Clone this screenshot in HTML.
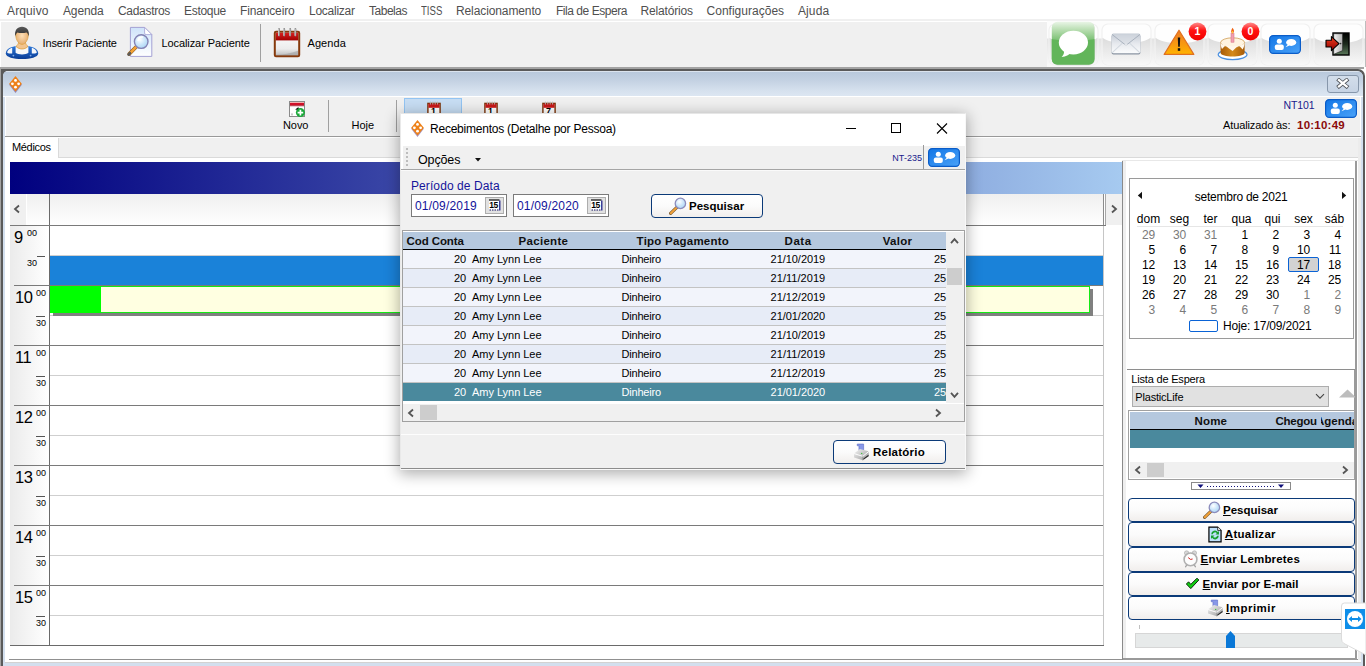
<!DOCTYPE html><html><head>
<meta charset="utf-8">
<title>Agenda</title>
<style>
html,body{margin:0;padding:0;}
body{width:1366px;height:666px;overflow:hidden;background:#fff;font-family:"Liberation Sans",sans-serif;font-size:12px;color:#000;position:relative;}
.a{position:absolute;}
.t{position:absolute;white-space:nowrap;line-height:1;}
/* menu */
#menu{left:0;top:0;width:1366px;height:20px;background:#fff;}
#menu .t{top:5px;font-size:12px;color:#4f4f4f;}
/* main toolbar */
#tb{left:1px;top:22px;width:1364px;height:45px;background:#f0f0f0;}
#tb .lbl{font-size:11px;color:#000;top:16px;}
/* inner window */
#mdi{left:0;top:67px;width:1363px;height:599px;}
.hl{position:absolute;height:1px;}
.vl{position:absolute;width:1px;}
/* schedule */
.hr{font-size:16.5px;color:#000;letter-spacing:-.5px;}
.mm{font-size:9px;color:#000;}
/* buttons */
.btn{position:absolute;border:1px solid #0b3a78;border-radius:4px;background:linear-gradient(#ffffff 0%,#fbfbfb 50%,#f1eeec 100%);box-sizing:border-box;}
.btn .t{font-weight:bold;font-size:11.5px;color:#000;}
/* grid */
.gh{font-weight:bold;font-size:11.5px;color:#101010;}
.gr{position:absolute;left:403px;width:543px;height:18px;}
.gr .t{top:4px;font-size:11px;color:#000;}
.cal{font-size:12px;color:#000;}
.cal .t{font-size:12px;}
.g{color:#7a7a7a;}
</style>
</head>
<body>
<!-- MENU BAR -->
<div id="menu" class="a">
<span class="t" style="left: 7px; letter-spacing: 0.13px;">Arquivo</span>
<span class="t" style="left: 63px; letter-spacing: -0.13px;">Agenda</span>
<span class="t" style="left: 118px; letter-spacing: -0.3px;">Cadastros</span>
<span class="t" style="left: 184px; letter-spacing: -0.29px;">Estoque</span>
<span class="t" style="left: 240px; letter-spacing: -0.15px;">Financeiro</span>
<span class="t" style="left: 309px; letter-spacing: -0.25px;">Localizar</span>
<span class="t" style="left: 369px; letter-spacing: -0.48px;">Tabelas</span>
<span class="t" style="left:421px;display:inline-block;transform:scaleX(.8);transform-origin:0 0">TISS</span>
<span class="t" style="left: 456px; letter-spacing: -0.11px;">Relacionamento</span>
<span class="t" style="left: 556px; letter-spacing: -0.46px;">Fila de Espera</span>
<span class="t" style="left: 640.5px; letter-spacing: -0.16px;">Relatórios</span>
<span class="t" style="left: 706.5px; letter-spacing: 0.02px;">Configurações</span>
<span class="t" style="left: 798px; letter-spacing: 0.1px;">Ajuda</span>
</div>
<div class="a" style="left:0;top:19px;width:1366px;height:2px;background:#f0f0f0"></div>
<!-- MAIN TOOLBAR -->
<div id="tb" class="a">
<span class="t lbl" style="left: 41.5px; letter-spacing: -0.13px;">Inserir Paciente</span>
<span class="t lbl" style="left: 160.5px; letter-spacing: -0.09px;">Localizar Paciente</span>
<div class="vl" style="left:259px;top:2px;height:38px;background:#a0a0a0"></div>
<span class="t lbl" style="left: 306.5px; letter-spacing: 0.08px;">Agenda</span>
</div>
<!-- TOOLBAR ICONS -->
<svg width="0" height="0" style="position:absolute">
<defs>
<linearGradient id="gBlue" x1="0" y1="0" x2="0" y2="1"><stop offset="0" stop-color="#2d78d8"></stop><stop offset="1" stop-color="#093c96"></stop></linearGradient>
<radialGradient id="gFace" cx=".5" cy=".45" r=".6"><stop offset="0" stop-color="#fde0b8"></stop><stop offset="1" stop-color="#e3a868"></stop></radialGradient>
<linearGradient id="gHair" x1="0" y1="0" x2="0" y2="1"><stop offset="0" stop-color="#5a5a5a"></stop><stop offset="1" stop-color="#2a2a2a"></stop></linearGradient>
<linearGradient id="gDoc" x1="0" y1="0" x2="0" y2="1"><stop offset="0" stop-color="#cfe3fa"></stop><stop offset="1" stop-color="#ffffff"></stop></linearGradient>
<radialGradient id="gLens" cx=".4" cy=".35" r=".7"><stop offset="0" stop-color="#ffffff"></stop><stop offset=".5" stop-color="#cfe8fb"></stop><stop offset="1" stop-color="#a8d4f4"></stop></radialGradient>
<linearGradient id="gRed" x1="0" y1="0" x2="0" y2="1"><stop offset="0" stop-color="#d82020"></stop><stop offset="1" stop-color="#a00000"></stop></linearGradient>
<linearGradient id="gPage" x1="0" y1="0" x2="0" y2="1"><stop offset="0" stop-color="#ffffff"></stop><stop offset=".7" stop-color="#ececec"></stop><stop offset="1" stop-color="#b8b8b8"></stop></linearGradient>
<linearGradient id="gGreen" x1="0" y1="0" x2="0" y2="1"><stop offset="0" stop-color="#e9f5e6"></stop><stop offset=".2" stop-color="#b5dcae"></stop><stop offset=".42" stop-color="#7ec277"></stop><stop offset=".46" stop-color="#63b35b"></stop><stop offset="1" stop-color="#62b75a"></stop></linearGradient>
<linearGradient id="gGloss" x1="0" y1="0" x2="0" y2="1"><stop offset="0" stop-color="#dcdcdc"></stop><stop offset="1" stop-color="#f8f8f8"></stop></linearGradient>
<linearGradient id="gWarn" x1="0" y1="0" x2="0" y2="1"><stop offset="0" stop-color="#ef7d28"></stop><stop offset=".6" stop-color="#f89a10"></stop><stop offset="1" stop-color="#ffb400"></stop></linearGradient>
<linearGradient id="gBadge" x1="0" y1="0" x2="0" y2="1"><stop offset="0" stop-color="#ff8a8a"></stop><stop offset=".45" stop-color="#ff1010"></stop><stop offset="1" stop-color="#f00000"></stop></linearGradient>
<linearGradient id="gMail" x1="0" y1="0" x2="0" y2="1"><stop offset="0" stop-color="#c2c9d3"></stop><stop offset=".5" stop-color="#e6e9ee"></stop><stop offset="1" stop-color="#fbfcfd"></stop></linearGradient>
<linearGradient id="gCake" x1="0" y1="0" x2="1" y2="0"><stop offset="0" stop-color="#a85c08"></stop><stop offset=".5" stop-color="#d48a1c"></stop><stop offset="1" stop-color="#a85c08"></stop></linearGradient>
<linearGradient id="gChat" x1="0" y1="0" x2="1" y2="1"><stop offset="0" stop-color="#1276e6"></stop><stop offset="1" stop-color="#4aa2f8"></stop></linearGradient>
<linearGradient id="gDoor" x1="0" y1="0" x2="1" y2="0"><stop offset="0" stop-color="#f4f4f4"></stop><stop offset="1" stop-color="#b0b0b0"></stop></linearGradient>
<linearGradient id="gFloor" x1="0" y1="0" x2="0" y2="1"><stop offset="0" stop-color="#000"></stop><stop offset=".5" stop-color="#1c2a1c"></stop><stop offset="1" stop-color="#5c7a5c"></stop></linearGradient>
<linearGradient id="gArrow" x1="0" y1="0" x2="0" y2="1"><stop offset="0" stop-color="#f04020"></stop><stop offset="1" stop-color="#900000"></stop></linearGradient>
<linearGradient id="gPrn" x1="0" y1="0" x2="1" y2="1"><stop offset="0" stop-color="#f4f4f4"></stop><stop offset="1" stop-color="#9a9a9a"></stop></linearGradient>
</defs></svg>
<!-- person -->
<svg class="a" style="left:5px;top:26px" width="34" height="34" viewBox="0 0 34 34">
<path d="M.8 27.400 C.8 22.600 7 20.600 11.600 20 L22.400 20 C27 20.600 33.200 22.600 33.200 27.400 C33.200 31 25.400 33 17 33 C8.600 33 .8 31 .8 27.400 Z" fill="url(#gBlue)"></path>
<path d="M2.200 26.800 C2.200 24 4.800 22.600 7.200 21.800 L7.200 27.600 C5.400 27.600 3.200 27.400 2.200 26.800 Z M31.800 26.800 C31.800 24 29.200 22.600 26.800 21.800 L26.800 27.600 C28.600 27.600 30.800 27.400 31.800 26.800 Z" fill="#f4f6fa"></path>
<path d="M10.600 20.200 L23.400 20.200 L23.400 26.800 C22 28 19.600 28.400 17 28.400 C14.400 28.400 12 28 10.600 26.800 Z" fill="#f6f7f9"></path>
<path d="M14 14 L20 14 C20 17.600 21.600 19.400 23 20.400 C21.400 22.200 19 23 17 23 C15 23 12.600 22.200 11 20.400 C12.400 19.400 14 17.600 14 14 Z" fill="#f2c48e" stroke="#d89a30" stroke-width=".7"></path>
<path d="M10.800 9.600 C10.800 5 13 2.400 17 2.400 C21 2.400 23.200 5 23.200 9.600 C23.200 13.600 20.400 18.400 17 18.400 C13.600 18.400 10.800 13.600 10.800 9.600 Z" fill="url(#gFace)" stroke="#d8982c" stroke-width=".6"></path>
<path d="M10.400 10.600 C9 4.400 12.400 .8 17 .8 C21.600 .8 25 4.400 23.600 10.600 C23.400 8.400 22.600 7 21.400 6.400 C18.400 7.400 14.400 7.200 12.400 6.400 C11.200 7.200 10.600 8.600 10.400 10.600 Z" fill="url(#gHair)"></path>
<circle cx="8.400" cy="29.600" r=".9" fill="#7eaaea"></circle><circle cx="25.600" cy="29.600" r=".9" fill="#7eaaea"></circle>
</svg>
<!-- doc + magnifier -->
<svg class="a" style="left:126px;top:26px" width="28" height="32" viewBox="0 0 28 32">
<path d="M4.400 1.400 H18.600 L25.800 8.600 V30.400 H4.400 Z" fill="url(#gDoc)" stroke="#a4a2d4" stroke-width="1"></path>
<path d="M18.600 1.400 L25.800 8.600 H20 Q18.600 8.600 18.600 7 Z" fill="#fff" stroke="#a4a2d4" stroke-width=".8"></path>
<path d="M11 20 L3.200 28" stroke="#8a5a20" stroke-width="3.800" stroke-linecap="round"></path>
<path d="M11 20 L3.400 27.800" stroke="#f5a233" stroke-width="2.600" stroke-linecap="round"></path>
<path d="M2.600 28.600 L4 27.200" stroke="#5a5a5a" stroke-width="2.600" stroke-linecap="round"></path>
<circle cx="15.200" cy="15.600" r="6.800" fill="url(#gLens)" stroke="#8482b4" stroke-width="1.400"></circle>
<path d="M12 14.400 C12.400 12 14.400 10.800 16.600 11" fill="none" stroke="#fff" stroke-width="1.400" stroke-linecap="round"></path>
</svg>
<!-- calendar -->
<svg class="a" style="left:272px;top:28px" width="30" height="30" viewBox="0 0 30 30">
<rect x="2.800" y="3.800" width="24.400" height="24.400" rx="1.200" fill="url(#gPage)" stroke="#863a0c" stroke-width="2"></rect>
<path d="M3.800 4.800 H26.200 V12.400 H3.800 Z" fill="url(#gRed)"></path>
<path d="M4 26.800 C12 26.800 18 25.600 26 22.800 V27.200 H4 Z" fill="#9a9a9a" opacity=".55"></path>
<path d="M7 1 V7.600 M12.200 1 V7.600 M18.200 1 V7.600 M23.400 1 V7.600" stroke="#7a7a7a" stroke-width="1.800" stroke-linecap="round"></path>
<path d="M6.700 1 V7.400 M11.900 1 V7.400 M17.900 1 V7.400 M23.100 1 V7.400" stroke="#e4e4e4" stroke-width=".9" stroke-linecap="round"></path>
</svg>
<!-- gloss cells -->
<div class="a" style="left:1047px;top:21px;width:318px;height:46px;background:linear-gradient(#fcfcfc 0,#fcfcfc 17px,#e4e4e4 18px,#f7f7f7 42px,#fafafa 46px)"></div>
<svg class="a" style="left:1048px;top:23px" width="51" height="43" viewBox="0 0 51 43"><rect x="1" y="1" width="49" height="41" rx="6" fill="#fefefe" stroke="#f1f1f1" stroke-width="1.2"></rect><path d="M1.500 14.800 C5 17.600 13 20.200 25.500 20.200 C38 20.200 46 17.600 49.500 14.800 V36 Q49.500 41.500 44 41.500 H7 Q1.500 41.500 1.500 36 Z" fill="url(#gGloss)"></path></svg>
<svg class="a" style="left:1101px;top:23px" width="51" height="43" viewBox="0 0 51 43"><rect x="1" y="1" width="49" height="41" rx="6" fill="#fefefe" stroke="#f1f1f1" stroke-width="1.2"></rect><path d="M1.500 14.800 C5 17.600 13 20.200 25.500 20.200 C38 20.200 46 17.600 49.500 14.800 V36 Q49.500 41.500 44 41.500 H7 Q1.500 41.500 1.500 36 Z" fill="url(#gGloss)"></path></svg>
<svg class="a" style="left:1154px;top:23px" width="51" height="43" viewBox="0 0 51 43"><rect x="1" y="1" width="49" height="41" rx="6" fill="#fefefe" stroke="#f1f1f1" stroke-width="1.2"></rect><path d="M1.500 14.800 C5 17.600 13 20.200 25.500 20.200 C38 20.200 46 17.600 49.500 14.800 V36 Q49.500 41.500 44 41.500 H7 Q1.500 41.500 1.500 36 Z" fill="url(#gGloss)"></path></svg>
<svg class="a" style="left:1207px;top:23px" width="51" height="43" viewBox="0 0 51 43"><rect x="1" y="1" width="49" height="41" rx="6" fill="#fefefe" stroke="#f1f1f1" stroke-width="1.2"></rect><path d="M1.500 14.800 C5 17.600 13 20.200 25.500 20.200 C38 20.200 46 17.600 49.500 14.800 V36 Q49.500 41.500 44 41.500 H7 Q1.500 41.500 1.500 36 Z" fill="url(#gGloss)"></path></svg>
<svg class="a" style="left:1260px;top:23px" width="51" height="43" viewBox="0 0 51 43"><rect x="1" y="1" width="49" height="41" rx="6" fill="#fefefe" stroke="#f1f1f1" stroke-width="1.2"></rect><path d="M1.500 14.800 C5 17.600 13 20.200 25.500 20.200 C38 20.200 46 17.600 49.500 14.800 V36 Q49.500 41.500 44 41.500 H7 Q1.500 41.500 1.500 36 Z" fill="url(#gGloss)"></path></svg>
<svg class="a" style="left:1313px;top:23px" width="51" height="43" viewBox="0 0 51 43"><rect x="1" y="1" width="49" height="41" rx="6" fill="#fefefe" stroke="#f1f1f1" stroke-width="1.2"></rect><path d="M1.500 14.800 C5 17.600 13 20.200 25.500 20.200 C38 20.200 46 17.600 49.500 14.800 V36 Q49.500 41.500 44 41.500 H7 Q1.500 41.500 1.500 36 Z" fill="url(#gGloss)"></path></svg>
<div class="vl" style="left:1365px;top:21px;height:46px;background:#bdbdbd"></div>
<!-- green chat -->
<svg class="a" style="left:1051px;top:21px" width="45" height="45" viewBox="0 0 45 45"><rect x="1" y="1.600" width="42.600" height="42.600" rx="5.500" fill="#6a6a6a" opacity=".25"></rect><rect x=".8" y=".8" width="42.600" height="42.600" rx="5.500" fill="url(#gGreen)"></rect><path d="M.8 18 C10 20.500 34 20.500 43.400 18 V38 Q43.400 43.400 38 43.400 H6.200 Q.8 43.400 .8 38 Z" fill="#62b55a"></path><ellipse cx="22.400" cy="21.600" rx="14.600" ry="11.800" fill="#fff"></ellipse><path d="M13 29 C13.400 32 12.600 34 10.600 36 C15 35.600 18 34 20 31.600 Z" fill="#fff"></path></svg>
<!-- mail -->
<svg class="a" style="left:1111px;top:33px" width="30" height="22" viewBox="0 0 30 22"><rect x=".6" y="1.600" width="28.800" height="20" rx="1.800" fill="#8a94a2"></rect><rect x=".6" y=".6" width="28.800" height="19.600" rx="1.800" fill="url(#gMail)"></rect><path d="M1 19.800 L11.400 10.200 M29 19.800 L18.600 10.200" stroke="#d3d9e0" stroke-width="1.100"></path><path d="M1 1.200 L15 12.400 L29 1.200 Z" fill="#d5dae1" opacity=".55"></path><path d="M1 1.400 L15 12.400 L29 1.400" fill="none" stroke="#a9b2be" stroke-width="1"></path><path d="M13.200 11.400 L15 12.800 L16.800 11.400 Z" fill="#fff"></path></svg>
<!-- warning -->
<svg class="a" style="left:1163px;top:29px" width="32" height="27" viewBox="0 0 32 27"><path d="M16 1.200 L30.800 25.400 H1.200 Z" fill="url(#gWarn)" stroke="#e07020" stroke-width="1.200" stroke-linejoin="round"></path><path d="M14.800 8.600 H17.200 L16.800 17.800 H15.200 Z" fill="#111"></path><rect x="14.800" y="19.200" width="2.400" height="2.600" fill="#111"></rect></svg>
<svg class="a" style="left:1188px;top:22px" width="19" height="19" viewBox="0 0 19 19"><circle cx="9.500" cy="9.500" r="8.900" fill="url(#gBadge)"></circle><text x="9.300" y="13.400" font-family="Liberation Sans" font-size="10.500" font-weight="bold" fill="#fff" text-anchor="middle">1</text></svg>
<!-- cake -->
<svg class="a" style="left:1217px;top:27px" width="31" height="34" viewBox="0 0 31 34"><ellipse cx="15.600" cy="27.600" rx="14.400" ry="5" fill="#fff" stroke="#4a90e0" stroke-width="1.200"></ellipse><path d="M3.600 15.600 V26 C3.600 30.600 27.600 30.600 27.600 26 V15.600 Z" fill="url(#gCake)"></path><ellipse cx="15.600" cy="15.600" rx="12" ry="4.800" fill="#fff4e0" stroke="#c89040" stroke-width=".7"></ellipse><path d="M3.600 15.600 C3.600 18 4 20 5 22 L8.400 18.400 L12 21.600 L15.600 24 L19.200 20.600 L22 18.400 L25.600 22.400 C27 20.400 27.600 18 27.600 15.600 C27.600 20.400 3.600 20.400 3.600 15.600 Z" fill="#fff8ec"></path><rect x="14" y="6.600" width="3" height="8.600" fill="#f0a0b0" stroke="#d86a80" stroke-width=".5"></rect><path d="M15.500 .8 C17.600 3 17.400 5.400 15.500 6.800 C13.600 5.400 13.800 3.600 15.500 .8 Z" fill="#f06010"></path><path d="M15.500 3.400 C16.400 4.600 16.300 5.800 15.500 6.600 C14.700 5.800 14.700 4.800 15.500 3.400 Z" fill="#ffd040"></path></svg>
<svg class="a" style="left:1241px;top:22px" width="19" height="19" viewBox="0 0 19 19"><circle cx="9.500" cy="9.500" r="8.900" fill="url(#gBadge)"></circle><text x="9.500" y="13.400" font-family="Liberation Sans" font-size="10.500" font-weight="bold" fill="#fff" text-anchor="middle">0</text></svg>
<!-- blue chat -->
<svg class="a" style="left:1269px;top:35px" width="32" height="19" viewBox="0 0 32 19"><rect x=".6" y=".6" width="30.8" height="17.8" rx="3.6" fill="url(#gChat)" stroke="#0a5cc8" stroke-width="1.2"></rect><circle cx="10.3" cy="6.3" r="2.5" fill="#fff"></circle><rect x="5.8" y="9.4" width="9" height="5.6" rx="2" fill="#fff"></rect><ellipse cx="22.2" cy="7.4" rx="5.1" ry="3.5" fill="#fff"></ellipse><path d="M19 9.4 L16.4 12.3 L20.5 10.5 Z" fill="#fff"></path></svg>
<!-- exit -->
<svg class="a" style="left:1325px;top:32px" width="26" height="24" viewBox="0 0 26 24"><rect x="8" y="1" width="16" height="22" fill="url(#gFloor)" stroke="#000" stroke-width="1.400"></rect><path d="M8.700 1.700 H17.600 V18.600 L8.700 22.300 Z" fill="url(#gDoor)" stroke="#222" stroke-width=".6"></path><path d="M1 8.200 H6.400 V4.600 L14 11.600 L6.400 18.600 V15 H1 Z" fill="url(#gArrow)" stroke="#000" stroke-width="1.100" stroke-linejoin="round"></path><circle cx="15.600" cy="11.600" r=".8" fill="#333"></circle></svg>

<!-- MDI CHILD FRAME -->
<div class="a" style="left:0;top:67px;width:1364px;height:2px;background:#a3a3a3"></div>
<div class="a" style="left:0;top:69px;width:1365px;height:597px;background:#5a5a5a;border-radius:0 7px 0 0"></div>
<div class="a" style="left:0;top:69px;width:1px;height:597px;background:#a3a3a3"></div>
<div class="a" style="left:3px;top:71px;width:1360px;height:595px;background:#d3dfee;border-radius:5px 6px 0 0"></div>
<div class="a" style="left:3px;top:71px;width:1360px;height:26px;background:linear-gradient(#fdfeff 0,#b9c9dc 1px,#c3d1e2 9px,#d6e1ee 20px,#dce6f2 25px,#ffffff 25px);border-radius:5px 6px 0 0"></div>
<div class="a" style="left:5px;top:96px;width:1356px;height:567px;background:#fff"></div>
<div class="a" style="left:6px;top:97px;width:1354px;height:39px;background:#f0f0f0"></div>
<!-- title icon -->
<svg class="a" style="left:7.500px;top:75px" width="15" height="18" viewBox="0 0 15 18"><path d="M7.5 1.2 L13.8 9 L7.5 17.2 L1.2 9 Z" fill="#5a3c8c" opacity=".55" transform="translate(0,0.8)"></path><path d="M7.5 1 L13.8 8.8 L7.5 16.6 L1.2 8.8 Z" fill="#ee8118"></path><circle cx="7.5" cy="5.4" r="1.4" fill="#fff"></circle><circle cx="7.5" cy="12.2" r="1.4" fill="#fff"></circle><circle cx="4.4" cy="8.8" r="1.4" fill="#fff"></circle><circle cx="10.6" cy="8.8" r="1.4" fill="#fff"></circle></svg>
<!-- mdi close -->
<div class="a" style="left:1327px;top:75px;width:32px;height:18px;box-sizing:border-box;border:1px solid #8797ab;border-radius:3px;background:linear-gradient(#d3deeb,#c6d3e4)"></div>
<svg class="a" style="left:1336px;top:78px" width="14" height="11" viewBox="0 0 14 11"><path d="M3 2.200 L10.600 8.400 M10.600 2.200 L3 8.400" stroke="#50545a" stroke-width="3.900" stroke-linecap="square"></path><path d="M3 2.200 L10.600 8.400 M10.600 2.200 L3 8.400" stroke="#fff" stroke-width="2.300" stroke-linecap="square"></path></svg>
<!-- agenda toolbar -->
<span class="t" style="left: 283px; top: 120px; font-size: 11px; letter-spacing: -0.07px;">Novo</span>
<div class="vl" style="left:328px;top:100px;height:32px;background:#a0a0a0"></div>
<span class="t" style="left: 351.5px; top: 120px; font-size: 11px; letter-spacing: -0.01px;">Hoje</span>
<div class="vl" style="left:396px;top:100px;height:32px;background:#a0a0a0"></div>
<div class="a" style="left:404px;top:98px;width:58px;height:37px;box-sizing:border-box;border:1px solid #93c4f2;background:#c7ddf3"></div>
<span class="t" style="left: 1283.5px; top: 100px; font-size: 10.5px; color: rgb(26, 26, 140); letter-spacing: -0.1px;">NT101</span>
<span class="t" style="left: 1223px; top: 120px; font-size: 11px; letter-spacing: -0.12px;">Atualizado às:</span>
<span class="t" style="left: 1297px; top: 120px; font-size: 11.5px; font-weight: bold; color: rgb(139, 10, 10); letter-spacing: 0.24px;">10:10:49</span>
<div class="hl" style="left:5px;top:136px;width:1356px;background:#999"></div>
<!-- novo icon -->
<svg class="a" style="left:289px;top:101px" width="17" height="17" viewBox="0 0 17 17"><rect x=".5" y=".5" width="15" height="15" fill="#fff" stroke="#8a8a8a" stroke-width="1"></rect><rect x="1" y="1" width="14" height="1.200" fill="#f2b0b0"></rect><rect x="1" y="2" width="14" height="2.600" fill="#d01028"></rect><rect x="1" y="4.600" width="14" height=".6" fill="#8a0a18"></rect><path d="M6.200 8.600 L8.800 6.600 H9.800 V10 H7.800 V8.800 Z" fill="#111"></path><rect x="2" y="12.400" width="2" height="2" fill="#c8c8c8"></rect><circle cx="11.400" cy="11.600" r="4.500" fill="#18a838"></circle><path d="M11.400 8.800 V14.400 M8.600 11.600 H14.200" stroke="#fff" stroke-width="1.700"></path></svg>
<!-- mini calendars -->
<svg class="a" style="left:427px;top:101px" width="14" height="16" viewBox="0 0 14 16"><rect x=".9" y="2.4" width="12.2" height="13" fill="#fff" stroke="#7a3208" stroke-width="1.4"></rect><rect x="1.4" y="2.6" width="11.2" height="4.2" fill="#c81818"></rect><path d="M3.4 0.6 V3.6 M5.8 .6 V3.6 M8.2 .6 V3.6 M10.6 .6 V3.6" stroke="#b8b8b8" stroke-width=".9"></path></svg><span class="t" style="left:431px;top:107px;font-size:9px;font-weight:bold">1</span>
<svg class="a" style="left:484px;top:101px" width="14" height="16" viewBox="0 0 14 16"><rect x=".9" y="2.4" width="12.2" height="13" fill="#fff" stroke="#7a3208" stroke-width="1.4"></rect><rect x="1.4" y="2.6" width="11.2" height="4.2" fill="#c81818"></rect><path d="M3.4 0.6 V3.6 M5.8 .6 V3.6 M8.2 .6 V3.6 M10.6 .6 V3.6" stroke="#b8b8b8" stroke-width=".9"></path></svg><span class="t" style="left:488px;top:107px;font-size:9px;font-weight:bold">1</span>
<svg class="a" style="left:542px;top:101px" width="14" height="16" viewBox="0 0 14 16"><rect x=".9" y="2.4" width="12.2" height="13" fill="#fff" stroke="#7a3208" stroke-width="1.4"></rect><rect x="1.4" y="2.6" width="11.2" height="4.2" fill="#c81818"></rect><path d="M3.4 0.6 V3.6 M5.8 .6 V3.6 M8.2 .6 V3.6 M10.6 .6 V3.6" stroke="#b8b8b8" stroke-width=".9"></path></svg><span class="t" style="left:546px;top:107px;font-size:9px;font-weight:bold">7</span>
<svg class="a" style="left:1325px;top:99px" width="32" height="19" viewBox="0 0 32 19"><rect x=".6" y=".6" width="30.8" height="17.8" rx="3.6" fill="url(#gChat)" stroke="#0a5cc8" stroke-width="1.2"></rect><circle cx="10.3" cy="6.3" r="2.5" fill="#fff"></circle><rect x="5.8" y="9.4" width="9" height="5.6" rx="2" fill="#fff"></rect><ellipse cx="22.2" cy="7.4" rx="5.1" ry="3.5" fill="#fff"></ellipse><path d="M19 9.4 L16.4 12.3 L20.5 10.5 Z" fill="#fff"></path></svg>
<!-- tab strip -->
<div class="a" style="left:59px;top:138px;width:1301px;height:19px;background:#f0f0f0"></div>
<div class="hl" style="left:58px;top:157px;width:1302px;background:#dadada"></div>
<div class="vl" style="left:58px;top:138px;height:20px;background:#dadada"></div>
<span class="t" style="left: 12px; top: 142px; font-size: 11px; letter-spacing: -0.34px;">Médicos</span>
<!-- schedule -->
<div class="a" style="left:10px;top:162px;width:1112px;height:32px;background:linear-gradient(90deg,#00007f 0%,#a6caf0 100%)"></div>
<div class="a" style="left:10px;top:194px;width:16px;height:31px;background:#f0f0f0"></div>
<div class="a" style="left:27px;top:194px;width:1077px;height:31px;background:linear-gradient(#efefef,#ffffff)"></div>
<div class="a" style="left:1106px;top:194px;width:16px;height:31px;background:#f0f0f0"></div>
<div class="vl" style="left:1103px;top:194px;height:32px;background:#8c8c8c"></div>
<div class="vl" style="left:1103px;top:226px;height:420px;background:#c6c6c6"></div>
<div class="vl" style="left:1105px;top:194px;height:32px;background:#a8a8a8"></div>
<div class="a" style="left:10px;top:226px;width:39px;height:419px;background:linear-gradient(90deg,#ebebeb,#ffffff)"></div>
<div class="vl" style="left:49px;top:194px;height:452px;background:#6a6a6a"></div>
<div class="hl" style="left:10px;top:225px;width:1096px;background:#7a7a7a"></div>
<span class="t hr" style="left:14px;top:229px">9</span><span class="t mm" style="left:27px;top:229px">00</span>
<div class="hl" style="left:50px;top:255px;width:1053px;background:#cfcfcf"></div>
<div class="hl" style="left:37px;top:256px;width:8px;background:#555"></div><span class="t mm" style="left:27px;top:259px">30</span>
<div class="hl" style="left:14px;top:285px;width:1089px;background:#7a7a7a"></div>
<span class="t hr" style="left:15px;top:289px">10</span><span class="t mm" style="left:36px;top:289px">00</span>
<div class="hl" style="left:50px;top:315px;width:1053px;background:#cfcfcf"></div>
<div class="hl" style="left:36px;top:316px;width:9px;background:#555"></div><span class="t mm" style="left:36px;top:319px">30</span>
<div class="hl" style="left:14px;top:345px;width:1089px;background:#7a7a7a"></div>
<span class="t hr" style="left:15px;top:349px">11</span><span class="t mm" style="left:36px;top:349px">00</span>
<div class="hl" style="left:50px;top:375px;width:1053px;background:#cfcfcf"></div>
<div class="hl" style="left:36px;top:376px;width:9px;background:#555"></div><span class="t mm" style="left:36px;top:379px">30</span>
<div class="hl" style="left:14px;top:405px;width:1089px;background:#7a7a7a"></div>
<span class="t hr" style="left:15px;top:409px">12</span><span class="t mm" style="left:36px;top:409px">00</span>
<div class="hl" style="left:50px;top:435px;width:1053px;background:#cfcfcf"></div>
<div class="hl" style="left:36px;top:436px;width:9px;background:#555"></div><span class="t mm" style="left:36px;top:439px">30</span>
<div class="hl" style="left:14px;top:465px;width:1089px;background:#7a7a7a"></div>
<span class="t hr" style="left:15px;top:469px">13</span><span class="t mm" style="left:36px;top:469px">00</span>
<div class="hl" style="left:50px;top:495px;width:1053px;background:#cfcfcf"></div>
<div class="hl" style="left:36px;top:496px;width:9px;background:#555"></div><span class="t mm" style="left:36px;top:499px">30</span>
<div class="hl" style="left:14px;top:525px;width:1089px;background:#7a7a7a"></div>
<span class="t hr" style="left:15px;top:529px">14</span><span class="t mm" style="left:36px;top:529px">00</span>
<div class="hl" style="left:50px;top:555px;width:1053px;background:#cfcfcf"></div>
<div class="hl" style="left:36px;top:556px;width:9px;background:#555"></div><span class="t mm" style="left:36px;top:559px">30</span>
<div class="hl" style="left:14px;top:585px;width:1089px;background:#7a7a7a"></div>
<span class="t hr" style="left:15px;top:589px">15</span><span class="t mm" style="left:36px;top:589px">00</span>
<div class="hl" style="left:50px;top:615px;width:1053px;background:#cfcfcf"></div>
<div class="hl" style="left:36px;top:616px;width:9px;background:#555"></div><span class="t mm" style="left:36px;top:619px">30</span>
<div class="hl" style="left:10px;top:645px;width:1094px;background:#6a6a6a"></div>
<div class="hl" style="left:9px;top:659px;width:1349px;background:#909090"></div>
<div class="hl" style="left:5px;top:662px;width:1356px;background:#d2d2d2"></div>
<!-- appointments -->
<div class="a" style="left:50px;top:256px;width:1053px;height:29px;background:#1a82d9"></div>
<div class="a" style="left:53px;top:313px;width:1040px;height:3px;background:#808080"></div>
<div class="a" style="left:50px;top:286px;width:1040px;height:27px;background:#ffffe1;box-sizing:border-box;border:1px solid #14ea14"></div>
<div class="a" style="left:50px;top:286px;width:51px;height:27px;background:#00ff00"></div>
<div class="a" style="left:1090px;top:289px;width:3px;height:27px;background:#808080"></div>
<svg class="a" style="left:12px;top:204px" width="10" height="10" viewBox="0 0 10 10"><path d="M7 1.5 L3 5 L7 8.5" fill="none" stroke="#555" stroke-width="1.8"></path></svg>
<svg class="a" style="left:1109px;top:204px" width="10" height="10" viewBox="0 0 10 10"><path d="M3 1.5 L7 5 L3 8.5" fill="none" stroke="#555" stroke-width="1.8"></path></svg>
<!-- RIGHT PANEL -->
<div class="a" style="left:1122px;top:161px;width:1px;height:499px;background:#8a8a8a"></div>
<div class="a" style="left:1123px;top:161px;width:3px;height:498px;background:#efefef"></div>
<div class="a" style="left:1126px;top:161px;width:229px;height:498px;background:#fff"></div>
<div class="a" style="left:1355px;top:161px;width:2px;height:499px;background:#9a9a9a"></div>
<div class="a" style="left:1358px;top:138px;width:3px;height:522px;background:#ececec"></div>
<div class="vl" style="left:1354px;top:370px;height:110px;background:#9a9a9a"></div>
<div class="hl" style="left:1122px;top:160px;width:236px;background:#e8e8e8"></div>
<div class="hl" style="left:1123px;top:658px;width:234px;height:2px;background:#9a9a9a"></div>
<div class="a" style="left:1129px;top:178px;width:225px;height:161px;box-sizing:border-box;border:1px solid #9a9a9a;background:#fff"></div>
<svg class="a" style="left:1137px;top:191px" width="6" height="9" viewBox="0 0 6 9"><path d="M5 0.8 L5 8 L0.8 4.4 Z" fill="#111"></path></svg>
<svg class="a" style="left:1341px;top:191px" width="6" height="9" viewBox="0 0 6 9"><path d="M1 0.8 L1 8 L5.2 4.4 Z" fill="#111"></path></svg>
<span class="t" style="left: 1194.8px; top: 191px; font-size: 12px; letter-spacing: -0.25px;">setembro de 2021</span>
<div class="hl" style="left:1137px;top:226px;width:206px;background:#e6e6e6"></div>
<span class="t" style="left:1128.5px;width:40px;text-align:center;top:213px;font-size:12px">dom</span>
<span class="t" style="left:1159.5px;width:40px;text-align:center;top:213px;font-size:12px">seg</span>
<span class="t" style="left:1190.5px;width:40px;text-align:center;top:213px;font-size:12px">ter</span>
<span class="t" style="left:1221.5px;width:40px;text-align:center;top:213px;font-size:12px">qua</span>
<span class="t" style="left:1252.5px;width:40px;text-align:center;top:213px;font-size:12px">qui</span>
<span class="t" style="left:1283.5px;width:40px;text-align:center;top:213px;font-size:12px">sex</span>
<span class="t" style="left:1314.5px;width:40px;text-align:center;top:213px;font-size:12px">sáb</span>
<div class="a" style="left:1288px;top:257px;width:31px;height:15px;box-sizing:border-box;border:1px solid #0a63d6;border-radius:2px;background:#d2d2d2"></div>
<span class="t g" style="left:1125px;width:30px;text-align:right;top:229px;font-size:12px;letter-spacing:-.2px">29</span>
<span class="t g" style="left:1156px;width:30px;text-align:right;top:229px;font-size:12px;letter-spacing:-.2px">30</span>
<span class="t g" style="left:1187px;width:30px;text-align:right;top:229px;font-size:12px;letter-spacing:-.2px">31</span>
<span class="t" style="left:1218px;width:30px;text-align:right;top:229px;font-size:12px;letter-spacing:-.2px">1</span>
<span class="t" style="left:1249px;width:30px;text-align:right;top:229px;font-size:12px;letter-spacing:-.2px">2</span>
<span class="t" style="left:1280px;width:30px;text-align:right;top:229px;font-size:12px;letter-spacing:-.2px">3</span>
<span class="t" style="left:1311px;width:30px;text-align:right;top:229px;font-size:12px;letter-spacing:-.2px">4</span>
<span class="t" style="left:1125px;width:30px;text-align:right;top:244px;font-size:12px;letter-spacing:-.2px">5</span>
<span class="t" style="left:1156px;width:30px;text-align:right;top:244px;font-size:12px;letter-spacing:-.2px">6</span>
<span class="t" style="left:1187px;width:30px;text-align:right;top:244px;font-size:12px;letter-spacing:-.2px">7</span>
<span class="t" style="left:1218px;width:30px;text-align:right;top:244px;font-size:12px;letter-spacing:-.2px">8</span>
<span class="t" style="left:1249px;width:30px;text-align:right;top:244px;font-size:12px;letter-spacing:-.2px">9</span>
<span class="t" style="left:1280px;width:30px;text-align:right;top:244px;font-size:12px;letter-spacing:-.2px">10</span>
<span class="t" style="left:1311px;width:30px;text-align:right;top:244px;font-size:12px;letter-spacing:-.2px">11</span>
<span class="t" style="left:1125px;width:30px;text-align:right;top:259px;font-size:12px;letter-spacing:-.2px">12</span>
<span class="t" style="left:1156px;width:30px;text-align:right;top:259px;font-size:12px;letter-spacing:-.2px">13</span>
<span class="t" style="left:1187px;width:30px;text-align:right;top:259px;font-size:12px;letter-spacing:-.2px">14</span>
<span class="t" style="left:1218px;width:30px;text-align:right;top:259px;font-size:12px;letter-spacing:-.2px">15</span>
<span class="t" style="left:1249px;width:30px;text-align:right;top:259px;font-size:12px;letter-spacing:-.2px">16</span>
<span class="t" style="left:1280px;width:30px;text-align:right;top:259px;font-size:12px;letter-spacing:-.2px">17</span>
<span class="t" style="left:1311px;width:30px;text-align:right;top:259px;font-size:12px;letter-spacing:-.2px">18</span>
<span class="t" style="left:1125px;width:30px;text-align:right;top:274px;font-size:12px;letter-spacing:-.2px">19</span>
<span class="t" style="left:1156px;width:30px;text-align:right;top:274px;font-size:12px;letter-spacing:-.2px">20</span>
<span class="t" style="left:1187px;width:30px;text-align:right;top:274px;font-size:12px;letter-spacing:-.2px">21</span>
<span class="t" style="left:1218px;width:30px;text-align:right;top:274px;font-size:12px;letter-spacing:-.2px">22</span>
<span class="t" style="left:1249px;width:30px;text-align:right;top:274px;font-size:12px;letter-spacing:-.2px">23</span>
<span class="t" style="left:1280px;width:30px;text-align:right;top:274px;font-size:12px;letter-spacing:-.2px">24</span>
<span class="t" style="left:1311px;width:30px;text-align:right;top:274px;font-size:12px;letter-spacing:-.2px">25</span>
<span class="t" style="left:1125px;width:30px;text-align:right;top:289px;font-size:12px;letter-spacing:-.2px">26</span>
<span class="t" style="left:1156px;width:30px;text-align:right;top:289px;font-size:12px;letter-spacing:-.2px">27</span>
<span class="t" style="left:1187px;width:30px;text-align:right;top:289px;font-size:12px;letter-spacing:-.2px">28</span>
<span class="t" style="left:1218px;width:30px;text-align:right;top:289px;font-size:12px;letter-spacing:-.2px">29</span>
<span class="t" style="left:1249px;width:30px;text-align:right;top:289px;font-size:12px;letter-spacing:-.2px">30</span>
<span class="t g" style="left:1280px;width:30px;text-align:right;top:289px;font-size:12px;letter-spacing:-.2px">1</span>
<span class="t g" style="left:1311px;width:30px;text-align:right;top:289px;font-size:12px;letter-spacing:-.2px">2</span>
<span class="t g" style="left:1125px;width:30px;text-align:right;top:304px;font-size:12px;letter-spacing:-.2px">3</span>
<span class="t g" style="left:1156px;width:30px;text-align:right;top:304px;font-size:12px;letter-spacing:-.2px">4</span>
<span class="t g" style="left:1187px;width:30px;text-align:right;top:304px;font-size:12px;letter-spacing:-.2px">5</span>
<span class="t g" style="left:1218px;width:30px;text-align:right;top:304px;font-size:12px;letter-spacing:-.2px">6</span>
<span class="t g" style="left:1249px;width:30px;text-align:right;top:304px;font-size:12px;letter-spacing:-.2px">7</span>
<span class="t g" style="left:1280px;width:30px;text-align:right;top:304px;font-size:12px;letter-spacing:-.2px">8</span>
<span class="t g" style="left:1311px;width:30px;text-align:right;top:304px;font-size:12px;letter-spacing:-.2px">9</span>
<div class="a" style="left:1189px;top:320px;width:29px;height:12px;box-sizing:border-box;border:1px solid #0a63d6;border-radius:2px;background:#fff"></div>
<span class="t" style="left: 1223px; top: 320px; font-size: 12px; letter-spacing: -0.19px;">Hoje: 17/09/2021</span>
<!-- lista de espera -->
<div class="hl" style="left:1127px;top:369px;width:228px;background:#8e8e8e"></div>
<span class="t" style="left: 1131.3px; top: 374px; font-size: 11px; letter-spacing: -0.19px;">Lista de Espera</span>
<div class="a" style="left:1132px;top:386px;width:197px;height:21px;box-sizing:border-box;border:1px solid #adadad;background:#e1e1e1"></div>
<span class="t" style="left: 1135.3px; top: 392px; font-size: 11px; letter-spacing: -0.19px;">PlasticLife</span>
<svg class="a" style="left:1315px;top:393px" width="10" height="7" viewBox="0 0 10 7"><path d="M1 1.2 L5 5.2 L9 1.2" fill="none" stroke="#444" stroke-width="1.1"></path></svg>
<svg class="a" style="left:1339px;top:389px" width="16" height="9" viewBox="0 0 16 9"><path d="M0 8.5 L8.5 0.5 L16 7.5 L16 8.5 Z" fill="#bdbdbd"></path></svg>
<div class="a" style="left:1128px;top:410px;width:227px;height:70px;box-sizing:border-box;border:1px solid #a0a0a0;background:#fff"></div>
<div class="a" style="left:1130px;top:412px;width:224px;height:17px;background:#b5c8de"></div>
<div class="hl" style="left:1130px;top:429px;width:224px;background:#000"></div>
<span class="t gh" style="left: 1194.5px; top: 416px; letter-spacing: 0.16px;">Nome</span>
<span class="t gh" style="left: 1275.5px; top: 416px; letter-spacing: -0.27px;">Chegou</span>
<div class="a" style="left:1321px;top:412px;width:33px;height:17px;overflow:hidden"><span class="t gh" style="left:-5px;top:4px">Agenda</span></div>
<div class="a" style="left:1130px;top:430px;width:224px;height:18px;background:#4a899d"></div>
<div class="a" style="left:1130px;top:462px;width:224px;height:16px;background:#f0f0f0"></div>
<div class="a" style="left:1147px;top:463px;width:17px;height:14px;background:#cdcdcd"></div>
<svg class="a" style="left:1133px;top:465px" width="10" height="10" viewBox="0 0 10 10"><path d="M7 1.5 L3 5 L7 8.5" fill="none" stroke="#555" stroke-width="1.8"></path></svg>
<svg class="a" style="left:1340px;top:465px" width="10" height="10" viewBox="0 0 10 10"><path d="M3 1.5 L7 5 L3 8.5" fill="none" stroke="#555" stroke-width="1.8"></path></svg>
<!-- splitter handle -->
<div class="a" style="left:1191px;top:482px;width:100px;height:8px;box-sizing:border-box;border:1px solid #8a8a8a;background:#fff"></div>
<svg class="a" style="left:1197px;top:484px" width="88" height="5" viewBox="0 0 88 5"><path d="M0.5 0.5 L6.5 0.5 L3.5 4 Z M81 0.5 L87 0.5 L84 4 Z" fill="#10107a"></path><path d="M10 2.5 H78" stroke="#10107a" stroke-width="1" stroke-dasharray="1 2"></path></svg>
<div class="btn" style="left:1128px;top:498px;width:227px;height:24px"></div><span class="t" style="left:1223px;top:505px;font-weight:bold;font-size:11.5px"><u>P</u>esquisar</span>
<div class="btn" style="left:1128px;top:522px;width:227px;height:25px"></div><span class="t" style="left: 1224.8px; top: 529px; font-weight: bold; font-size: 11.5px; letter-spacing: 0.27px;"><u>A</u>tualizar</span>
<div class="btn" style="left:1128px;top:547px;width:227px;height:25px"></div><span class="t" style="left: 1200.6px; top: 554px; font-weight: bold; font-size: 11.5px; letter-spacing: 0.18px;"><u>E</u>nviar Lembretes</span>
<div class="btn" style="left:1128px;top:572px;width:227px;height:24px"></div><span class="t" style="left: 1202.6px; top: 579px; font-weight: bold; font-size: 11.5px; letter-spacing: 0.08px;"><u>E</u>nviar por E-mail</span>
<div class="btn" style="left:1128px;top:596px;width:227px;height:24px"></div><span class="t" style="left: 1226px; top: 603px; font-weight: bold; font-size: 11.5px; letter-spacing: 0.5px;"><u>I</u>mprimir</span>
<svg class="a" style="left:1203px;top:501px" width="18" height="18" viewBox="0 0 18 18"><path d="M8.6 9.6 L1.6 16.4" stroke="#7a5a30" stroke-width="3.2" stroke-linecap="round"></path><path d="M8.6 9.6 L1.8 16.2" stroke="#f2a23a" stroke-width="2" stroke-linecap="round"></path><circle cx="11.4" cy="6.4" r="5.2" fill="url(#gLens)" stroke="#8c8cbc" stroke-width="1.3"></circle></svg>
<svg class="a" style="left:1207.500px;top:526px" width="14" height="17" viewBox="0 0 15 18"><path d="M1 1 H10.400 L14 4.600 V17 H1 Z" fill="#bfe0fa" stroke="#000" stroke-width="1.300"></path><path d="M10.400 1 V4.600 H14" fill="#fff" stroke="#000" stroke-width=".8"></path><path d="M3.400 8.600 A4 4 0 0 1 10.600 6.400 L11.800 5.200 V9 H8 L9.400 7.600 A2.400 2.400 0 0 0 5.200 8.600 Z" fill="#18a030"></path><path d="M11.600 10.400 A4 4 0 0 1 4.400 12.600 L3.200 13.800 V10 H7 L5.600 11.400 A2.400 2.400 0 0 0 9.800 10.400 Z" fill="#18a030"></path></svg>
<svg class="a" style="left:1183px;top:550px" width="15" height="18" viewBox="0 0 15 18"><circle cx="3.600" cy="3" r="2.200" fill="#d8d8d8" stroke="#a8a8a8" stroke-width=".6"></circle><circle cx="11.400" cy="3" r="2.200" fill="#d8d8d8" stroke="#a8a8a8" stroke-width=".6"></circle><path d="M3.600 15 L2.400 17.200 M11.400 15 L12.600 17.200" stroke="#9a9a9a" stroke-width="1.200"></path><circle cx="7.500" cy="9.400" r="6.400" fill="#fdfdfd" stroke="#b0b0b0" stroke-width="1.600"></circle><path d="M7.500 9.400 L5.200 7.600 M7.500 9.400 L9.600 9" stroke="#d02020" stroke-width="1"></path></svg>
<svg class="a" style="left:1185px;top:577px" width="15" height="13" viewBox="0 0 15 13"><path d="M1.400 7 L3.600 4.800 L5.800 7.400 L12 1.200 L13.800 3 L5.800 11.600 Z" fill="#10d010" stroke="#0a2a0a" stroke-width="1" stroke-linejoin="round"></path></svg>
<svg class="a" style="left:1206.500px;top:599px" width="17" height="18" viewBox="0 0 16 17"><path d="M4 1 H10 V7.5 H5.6 V2.6 H4 Z" fill="#8898e8" stroke="#6070c8" stroke-width=".6"></path><path d="M1 10 L6.5 5.6 L14.8 7.8 L15 12.2 L9.2 16.4 L1 13.6 Z" fill="url(#gPrn)"></path><path d="M1 10 L9.2 12.6 L15 7.9" fill="none" stroke="#fff" stroke-width=".9"></path><path d="M9.2 12.6 V16.4" stroke="#8a8a8a" stroke-width=".6"></path><path d="M9.8 14.6 L14.6 11.2 V12.4 L9.8 15.8 Z" fill="#2a2a2a"></path><circle cx="8.2" cy="9.8" r=".6" fill="#30c030"></circle></svg>
<!-- slider -->
<div class="vl" style="left:1139px;top:625px;height:4px;background:#c0c0c0"></div>
<div class="a" style="left:1135px;top:633px;width:213px;height:15px;box-sizing:border-box;border:1px solid #d6d6d6;background:#e7eaea"></div>
<svg class="a" style="left:1226px;top:631px" width="9" height="17" viewBox="0 0 10 17" preserveAspectRatio="none"><path d="M0 5 L5 0 L10 5 L10 17 L0 17 Z" fill="#0a78d7"></path></svg>
<!-- teamviewer -->
<svg class="a" style="left:1338px;top:599px" width="28" height="60" viewBox="0 0 28 60"><path d="M28 4 H6.5 Q3.5 4 3.5 7 V40 Q3.5 43 6 44.5 L28 56 Z" fill="#fff" stroke="#dcdcdc" stroke-width="1"></path><rect x="7" y="10" width="20" height="20" fill="#0e8ee9"></rect><circle cx="17" cy="20" r="8" fill="#fff"></circle><path d="M10.5 20 L14 17 V19 H20 V17 L23.5 20 L20 23 V21 H14 V23 Z" fill="#0e8ee9"></path></svg>
<!-- DIALOG -->
<div class="a" style="left:400px;top:113px;width:566px;height:357px;box-sizing:border-box;border:1px solid #f8f8f8;border-top-color:#e6e6e6;border-left-color:#e9e9e9;background:#f0f0f0;box-shadow:0 3px 14px 1px rgba(0,0,0,.32)"></div>
<div class="hl" style="left:401px;top:468px;width:564px;background:#8c8c8c"></div>
<div class="a" style="left:401px;top:114px;width:564px;height:32px;background:#fff"></div>
<svg class="a" style="left:409.500px;top:119px" width="15" height="18" viewBox="0 0 15 18"><path d="M7.5 1.2 L13.8 9 L7.5 17.2 L1.2 9 Z" fill="#5a3c8c" opacity=".55" transform="translate(0,0.8)"></path><path d="M7.5 1 L13.8 8.8 L7.5 16.6 L1.2 8.8 Z" fill="#ee8118"></path><circle cx="7.5" cy="5.4" r="1.4" fill="#fff"></circle><circle cx="7.5" cy="12.2" r="1.4" fill="#fff"></circle><circle cx="4.4" cy="8.8" r="1.4" fill="#fff"></circle><circle cx="10.6" cy="8.8" r="1.4" fill="#fff"></circle></svg>
<span class="t" style="left: 430px; top: 123px; font-size: 12px; letter-spacing: -0.23px;">Recebimentos (Detalhe por Pessoa)</span>
<svg class="a" style="left:840px;top:118px" width="115" height="22" viewBox="0 0 115 22"><path d="M6 10.5 H16" stroke="#000" stroke-width="1"></path><rect x="51.5" y="5.5" width="9" height="9" fill="none" stroke="#000" stroke-width="1"></rect><path d="M97 5.5 L107 15.5 M107 5.5 L97 15.5" stroke="#000" stroke-width="1.1"></path></svg>
<!-- options bar -->
<div class="hl" style="left:401px;top:169px;width:564px;background:#a5a5a5"></div>
<div class="hl" style="left:401px;top:170px;width:564px;background:#fafafa"></div>
<div class="a" style="left:401px;top:146px;width:2px;height:23px;background:#fff"></div>
<div class="vl" style="left:406px;top:148px;height:18px;width:2px;background:repeating-linear-gradient(#bdbdbd 0 2px,transparent 2px 4px)"></div>
<span class="t" style="left: 418px; top: 154px; font-size: 12.5px; letter-spacing: -0.13px;">Opções</span>
<svg class="a" style="left:475px;top:158px" width="6" height="4" viewBox="0 0 6 4"><path d="M0 0 H6 L3 3.5 Z" fill="#111"></path></svg>
<span class="t" style="left: 892.3px; top: 154px; font-size: 9px; color: rgb(26, 26, 140); letter-spacing: 0.05px;">NT-235</span>
<div class="vl" style="left:923px;top:145px;height:24px;background:#9a9a9a"></div>
<svg class="a" style="left:928px;top:148px" width="32" height="19" viewBox="0 0 32 19"><rect x=".6" y=".6" width="30.8" height="17.8" rx="3.6" fill="url(#gChat)" stroke="#0a5cc8" stroke-width="1.2"></rect><circle cx="10.3" cy="6.3" r="2.5" fill="#fff"></circle><rect x="5.8" y="9.4" width="9" height="5.6" rx="2" fill="#fff"></rect><ellipse cx="22.2" cy="7.4" rx="5.1" ry="3.5" fill="#fff"></ellipse><path d="M19 9.4 L16.4 12.3 L20.5 10.5 Z" fill="#fff"></path></svg>
<!-- period -->
<span class="t" style="left: 411px; top: 180px; font-size: 12px; color: rgb(20, 20, 154); letter-spacing: 0.09px;">Período de Data</span>
<div class="a" style="left:411px;top:194px;width:96px;height:23px;box-sizing:border-box;border:1px solid #7a7a7a;background:#fff"></div>
<span class="t" style="left: 415px; top: 200px; font-size: 12px; color: rgb(20, 20, 154); letter-spacing: 0.19px;">01/09/2019</span>
<div class="a" style="left:513px;top:194px;width:96px;height:23px;box-sizing:border-box;border:1px solid #7a7a7a;background:#fff"></div>
<span class="t" style="left: 517px; top: 200px; font-size: 12px; color: rgb(20, 20, 154); letter-spacing: 0.19px;">01/09/2020</span>
<div class="a" style="left:485px;top:197px;width:19px;height:17px;box-sizing:border-box;border:1px solid #adadad;background:#e1e1e1"></div><svg class="a" style="left:488px;top:199px" width="13" height="12" viewBox="0 0 13 12"><rect x="1" y=".5" width="10.500" height="10.500" fill="#fff"></rect><path d="M1 1 H11.500" stroke="#000" stroke-width="1.200"></path><path d="M1.500 11 H11.500" stroke="#101060" stroke-width="1.100" stroke-dasharray="1.500 1"></path><path d="M11.800 1.500 V11.500" stroke="#101080" stroke-width="1.200"></path><text x="1.300" y="9.300" font-family="Liberation Sans" font-size="8.500" font-weight="bold" fill="#000" letter-spacing="-.5">15</text></svg>
<div class="a" style="left:587px;top:197px;width:19px;height:17px;box-sizing:border-box;border:1px solid #adadad;background:#e1e1e1"></div><svg class="a" style="left:590px;top:199px" width="13" height="12" viewBox="0 0 13 12"><rect x="1" y=".5" width="10.500" height="10.500" fill="#fff"></rect><path d="M1 1 H11.500" stroke="#000" stroke-width="1.200"></path><path d="M1.500 11 H11.500" stroke="#101060" stroke-width="1.100" stroke-dasharray="1.500 1"></path><path d="M11.800 1.500 V11.500" stroke="#101080" stroke-width="1.200"></path><text x="1.300" y="9.300" font-family="Liberation Sans" font-size="8.500" font-weight="bold" fill="#000" letter-spacing="-.5">15</text></svg>
<div class="btn" style="left:651px;top:194px;width:112px;height:24px"></div>
<svg class="a" style="left:669px;top:197px" width="18" height="18" viewBox="0 0 18 18"><path d="M8.6 9.6 L1.6 16.4" stroke="#7a5a30" stroke-width="3.2" stroke-linecap="round"></path><path d="M8.6 9.6 L1.8 16.2" stroke="#f2a23a" stroke-width="2" stroke-linecap="round"></path><circle cx="11.4" cy="6.4" r="5.2" fill="url(#gLens)" stroke="#8c8cbc" stroke-width="1.3"></circle></svg>
<span class="t" style="left: 689px; top: 201px; font-weight: bold; font-size: 11.5px; letter-spacing: 0.02px;">Pesquisar</span>
<!-- grid -->
<div class="a" style="left:402px;top:230px;width:563px;height:192px;box-sizing:border-box;border:1px solid #a0a0a0;background:#fff"></div>
<div class="a" style="left:946px;top:232px;width:18px;height:171px;background:#f0f0f0"></div>
<div class="a" style="left:403px;top:232px;width:543px;height:17px;background:#b5c8de"></div>
<div class="hl" style="left:403px;top:249px;width:543px;background:#000"></div>
<span class="t gh" style="left: 406.6px; top: 236px; letter-spacing: -0.1px;">Cod Conta</span>
<span class="t gh" style="left: 518.6px; top: 236px; letter-spacing: 0.29px;">Paciente</span>
<span class="t gh" style="left: 636.6px; top: 236px; letter-spacing: 0.23px;">Tipo Pagamento</span>
<span class="t gh" style="left: 784.6px; top: 236px; letter-spacing: 0.52px;">Data</span>
<span class="t gh" style="left: 882.8px; top: 236px; letter-spacing: 0.29px;">Valor</span>
<div class="gr" style="top:250px;background:#f2f4fb"><span class="t" style="left:51px">20</span><span class="t" style="left: 69px; letter-spacing: -0.03px;">Amy Lynn Lee</span><span class="t" style="left: 218.6px; letter-spacing: -0.22px;">Dinheiro</span><span class="t" style="left: 367.6px; letter-spacing: -0.05px;">21/10/2019</span><span class="t" style="left:531px">25</span></div>
<div class="hl" style="left:403px;top:268px;width:543px;background:#c3c3c3"></div>
<div class="gr" style="top:269px;background:#e7ecf7"><span class="t" style="left:51px">20</span><span class="t" style="left: 69px; letter-spacing: -0.03px;">Amy Lynn Lee</span><span class="t" style="left: 218.6px; letter-spacing: -0.22px;">Dinheiro</span><span class="t" style="left: 367.6px; letter-spacing: 0.04px;">21/11/2019</span><span class="t" style="left:531px">25</span></div>
<div class="hl" style="left:403px;top:287px;width:543px;background:#c3c3c3"></div>
<div class="gr" style="top:288px;background:#f2f4fb"><span class="t" style="left:51px">20</span><span class="t" style="left: 69px; letter-spacing: -0.03px;">Amy Lynn Lee</span><span class="t" style="left: 218.6px; letter-spacing: -0.22px;">Dinheiro</span><span class="t" style="left: 367.6px; letter-spacing: -0.05px;">21/12/2019</span><span class="t" style="left:531px">25</span></div>
<div class="hl" style="left:403px;top:306px;width:543px;background:#c3c3c3"></div>
<div class="gr" style="top:307px;background:#e7ecf7"><span class="t" style="left:51px">20</span><span class="t" style="left: 69px; letter-spacing: -0.03px;">Amy Lynn Lee</span><span class="t" style="left: 218.6px; letter-spacing: -0.22px;">Dinheiro</span><span class="t" style="left: 367.6px; letter-spacing: -0.05px;">21/01/2020</span><span class="t" style="left:531px">25</span></div>
<div class="hl" style="left:403px;top:325px;width:543px;background:#c3c3c3"></div>
<div class="gr" style="top:326px;background:#f2f4fb"><span class="t" style="left:51px">20</span><span class="t" style="left: 69px; letter-spacing: -0.03px;">Amy Lynn Lee</span><span class="t" style="left: 218.6px; letter-spacing: -0.22px;">Dinheiro</span><span class="t" style="left: 367.6px; letter-spacing: -0.05px;">21/10/2019</span><span class="t" style="left:531px">25</span></div>
<div class="hl" style="left:403px;top:344px;width:543px;background:#c3c3c3"></div>
<div class="gr" style="top:345px;background:#e7ecf7"><span class="t" style="left:51px">20</span><span class="t" style="left: 69px; letter-spacing: -0.03px;">Amy Lynn Lee</span><span class="t" style="left: 218.6px; letter-spacing: -0.22px;">Dinheiro</span><span class="t" style="left: 367.6px; letter-spacing: 0.04px;">21/11/2019</span><span class="t" style="left:531px">25</span></div>
<div class="hl" style="left:403px;top:363px;width:543px;background:#c3c3c3"></div>
<div class="gr" style="top:364px;background:#f2f4fb"><span class="t" style="left:51px">20</span><span class="t" style="left: 69px; letter-spacing: -0.03px;">Amy Lynn Lee</span><span class="t" style="left: 218.6px; letter-spacing: -0.22px;">Dinheiro</span><span class="t" style="left: 367.6px; letter-spacing: -0.05px;">21/12/2019</span><span class="t" style="left:531px">25</span></div>
<div class="hl" style="left:403px;top:382px;width:543px;background:#c3c3c3"></div>
<div class="gr" style="top:383px;background:#4a899d;color:#fff"><span class="t" style="left:51px;color:#fff">20</span><span class="t" style="left: 69px; color: rgb(255, 255, 255); letter-spacing: -0.03px;">Amy Lynn Lee</span><span class="t" style="left: 218.6px; color: rgb(255, 255, 255); letter-spacing: -0.22px;">Dinheiro</span><span class="t" style="left: 367.6px; color: rgb(255, 255, 255); letter-spacing: -0.05px;">21/01/2020</span><span class="t" style="left:531px;color:#fff">25</span></div>
<div class="a" style="left:947px;top:268px;width:15px;height:17px;background:#cdcdcd"></div>
<svg class="a" style="left:950px;top:237px" width="9" height="8" viewBox="0 0 9 8"><path d="M1 6.2 L4.5 2.2 L8 6.2" fill="none" stroke="#555" stroke-width="1.8"></path></svg>
<svg class="a" style="left:950px;top:391px" width="9" height="8" viewBox="0 0 9 8"><path d="M1 1.8 L4.5 5.8 L8 1.8" fill="none" stroke="#555" stroke-width="1.8"></path></svg>
<div class="a" style="left:403px;top:404px;width:561px;height:17px;background:#f0f0f0"></div>
<div class="a" style="left:420px;top:405px;width:17px;height:15px;background:#cdcdcd"></div>
<svg class="a" style="left:406px;top:408px" width="10" height="10" viewBox="0 0 10 10"><path d="M7 1.5 L3 5 L7 8.5" fill="none" stroke="#555" stroke-width="1.8"></path></svg>
<svg class="a" style="left:933px;top:408px" width="10" height="10" viewBox="0 0 10 10"><path d="M3 1.5 L7 5 L3 8.5" fill="none" stroke="#555" stroke-width="1.8"></path></svg>
<div class="hl" style="left:401px;top:434px;width:564px;background:#fdfdfd"></div>
<div class="btn" style="left:833px;top:440px;width:113px;height:24px"></div>
<svg class="a" style="left:853px;top:443px" width="17" height="18" viewBox="0 0 16 17"><path d="M4 1 H10 V7.5 H5.6 V2.6 H4 Z" fill="#8898e8" stroke="#6070c8" stroke-width=".6"></path><path d="M1 10 L6.5 5.6 L14.8 7.8 L15 12.2 L9.2 16.4 L1 13.6 Z" fill="url(#gPrn)"></path><path d="M1 10 L9.2 12.6 L15 7.9" fill="none" stroke="#fff" stroke-width=".9"></path><path d="M9.2 12.6 V16.4" stroke="#8a8a8a" stroke-width=".6"></path><path d="M9.8 14.6 L14.6 11.2 V12.4 L9.8 15.8 Z" fill="#2a2a2a"></path><circle cx="8.2" cy="9.8" r=".6" fill="#30c030"></circle></svg>
<span class="t" style="left: 873px; top: 447px; font-weight: bold; font-size: 11.5px; letter-spacing: 0.24px;">Relatório</span>


</body></html>
